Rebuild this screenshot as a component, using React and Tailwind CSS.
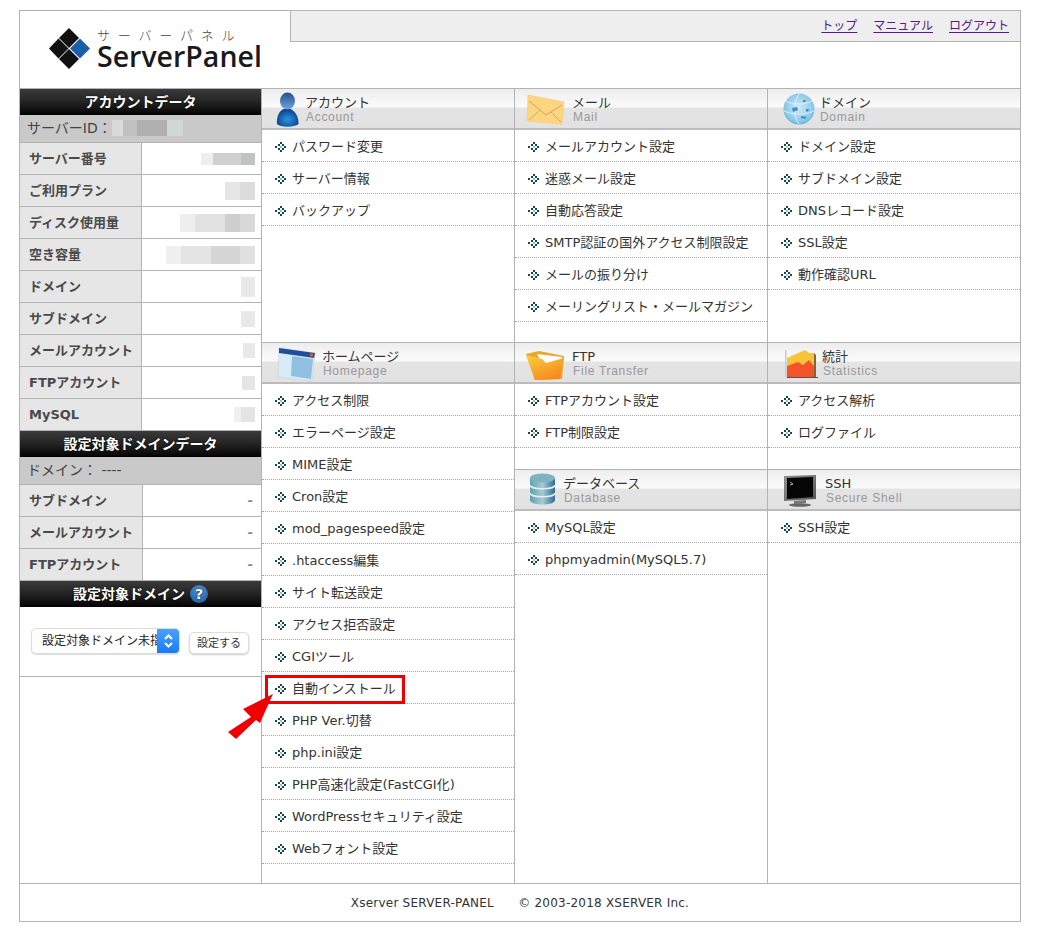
import React from "react";

const JP = "font-['DejaVu_Sans','Noto_Sans_CJK_JP',sans-serif]";

function Bullet() {
  return (
    <svg width="12" height="10" viewBox="0 0 12 10" className="shrink-0" shapeRendering="crispEdges">
      <g fill="#12494f">
        <rect x="0" y="4" width="2" height="2" />
        <rect x="5" y="0" width="2" height="2" />
        <rect x="3" y="2" width="2" height="2" />
        <rect x="7" y="2" width="2" height="2" />
        <rect x="9" y="4" width="2" height="2" />
        <rect x="3" y="6" width="2" height="2" />
        <rect x="7" y="6" width="2" height="2" />
        <rect x="5" y="8" width="2" height="2" />
      </g>
      <rect x="5" y="4" width="2" height="2" fill="#9dbcbf" />
    </svg>
  );
}

function Item({ children }) {
  return (
    <li className="h-[32px] flex items-center pl-[13px] pt-[2px] gap-[5px] border-b border-dotted border-[#a8a8a8] text-[13px] leading-none text-[#333]">
      <Bullet />
      <span>{children}</span>
    </li>
  );
}

function Head({ icon, slot, ja, en }) {
  return (
    <div className="h-[41px] flex items-stretch border-b-2 border-[#bcbcbc] bg-[linear-gradient(#ededed_0%,#fbfbfb_46%,#e4e4e4_49%,#e2e2e2_100%)]">
      <div className={`${slot} shrink-0`}>{icon}</div>
      <div className="flex flex-col pt-[6px]">
        <span className="text-[13px] leading-[16px] text-[#333]">{ja}</span>
        <span className="font-['Liberation_Sans',sans-serif] text-[12px] leading-[12px] tracking-[0.7px] text-[#999] pl-[1px]">{en}</span>
      </div>
    </div>
  );
}

function Section({ icon, slot, ja, en, items, className = "" }) {
  return (
    <section className={className}>
      <Head icon={icon} slot={slot} ja={ja} en={en} />
      <ul>
        {items.map((t) => (
          <Item key={t}>{t}</Item>
        ))}
      </ul>
    </section>
  );
}

const AccountIcon = (
  <svg width="43" height="40" viewBox="0 0 43 40">
    <defs>
      <linearGradient id="ac1" x1="0" y1="0" x2="0" y2="1">
        <stop offset="0" stopColor="#24508f" />
        <stop offset="1" stopColor="#6fa5da" />
      </linearGradient>
      <radialGradient id="ac2" cx=".5" cy=".6" r=".6">
        <stop offset="0" stopColor="#2a96e0" />
        <stop offset="1" stopColor="#0d3c8a" />
      </radialGradient>
    </defs>
    <path d="M15 35 C14 27 18 21 22 20 H28 C32 21 37 27 36.5 35 C32 38.5 19 38.5 15 35Z" fill="url(#ac2)" />
    <ellipse cx="25.5" cy="12" rx="7.5" ry="8.5" fill="url(#ac1)" />
  </svg>
);

const MailIcon = (
  <svg width="57" height="40" viewBox="0 0 57 40">
    <path d="M13 6 L49 13 L47 35 L12 32Z" fill="#fdd57f" />
    <path d="M13 6 L49 13 L47 35 L12 32Z" fill="none" stroke="#fbc868" strokeWidth=".6" />
    <path d="M14 12 L31 26 L47 16 M14 31 L25 21 M46 33 L36 23" fill="none" stroke="#c9a773" strokeWidth="1" />
  </svg>
);

const DomainIcon = (
  <svg width="51" height="40" viewBox="0 0 51 40">
    <defs>
      <radialGradient id="gl" cx=".5" cy=".45" r=".6">
        <stop offset="0" stopColor="#cfe9f6" />
        <stop offset=".75" stopColor="#8cc9e8" />
        <stop offset="1" stopColor="#4fa6d6" />
      </radialGradient>
    </defs>
    <circle cx="31" cy="20" r="15.5" fill="url(#gl)" />
    <g fill="none" stroke="#eaf6fb" strokeWidth=".8">
      <path d="M18 12 C24 16 38 16 44 12 M16 22 C24 26 38 26 46 22 M31 5 C25 14 25 27 31 35" />
    </g>
    <g fill="#3b8fcb">
      <path d="M24 19 L29 18 L30 21 L25 23Z" />
      <path d="M33 27 L39 28 L37 30 L33 29Z" />
      <path d="M35 11 L38 11 L37 13 L35 13Z" />
      <path d="M38 20 L41 20 L40 23 L38 22Z" />
    </g>
  </svg>
);

const HomeIcon = (
  <svg width="60" height="40" viewBox="0 0 60 40">
    <path d="M17 5 L53 10 L50 38 L16 34Z" fill="#d8ecf8" stroke="#c9ced2" strokeWidth=".6" />
    <path d="M17 5 L53 10 L52 15 L17 10Z" fill="#1e4f9c" />
    <rect x="48" y="10.5" width="3" height="3" fill="#e4572e" />
    <path d="M30 13 L51 16 L49 36 L29 33Z" fill="#8fc0e2" />
  </svg>
);

const FtpIcon = (
  <svg width="57" height="40" viewBox="0 0 57 40">
    <defs>
      <linearGradient id="fd" x1="0" y1="0" x2=".6" y2="1">
        <stop offset="0" stopColor="#fbd03f" />
        <stop offset="1" stopColor="#f58a1f" />
      </linearGradient>
    </defs>
    <path d="M11 11 L24 8 L49 13 L47 36 L20 37Z" fill="#eea62a" />
    <path d="M22 11 L47 14 L46 26 L28 22Z" fill="#fff" />
    <path d="M11 12 L27 16 L31 20 L49 15 L45 36 L20 37Z" fill="url(#fd)" />
  </svg>
);

const StatsIcon = (
  <svg width="54" height="40" viewBox="0 0 54 40">
    <rect x="17" y="7" width="1.5" height="27" fill="#c9c9c9" />
    <path d="M19 15 L37 7 L41 10 L46 10 L46 24 L19 24Z" fill="#fbc23c" />
    <path d="M19 23 L30 19 L35 22 L41 17 L46 23 L46 34 L19 34Z" fill="#f7532a" />
    <path d="M46 10 L48 12 L48 34 L46 34Z" fill="#7a6a3a" />
    <path d="M19 34.5 H50" stroke="#555" strokeWidth="1" />
  </svg>
);

const DbIcon = (
  <svg width="48" height="40" viewBox="0 0 48 40">
    <defs>
      <linearGradient id="db" x1="0" y1="0" x2="1" y2="0">
        <stop offset="0" stopColor="#5ea0b0" />
        <stop offset=".5" stopColor="#a8cbd4" />
        <stop offset="1" stopColor="#2d6f92" />
      </linearGradient>
    </defs>
    <path d="M15 8 V30 C15 36 40 36 40 30 V8Z" fill="url(#db)" />
    <ellipse cx="27.5" cy="8" rx="12.5" ry="4.5" fill="#7fb3c2" />
    <path d="M15 15 C15 20 40 20 40 15 M15 23 C15 28 40 28 40 23" fill="none" stroke="#e6f0f3" strokeWidth="1.5" />
  </svg>
);

const SshIcon = (
  <svg width="57" height="40" viewBox="0 0 57 40">
    <defs>
      <linearGradient id="ss" x1="0" y1="0" x2="1" y2="1">
        <stop offset="0" stopColor="#8f8f8f" />
        <stop offset="1" stopColor="#555" />
      </linearGradient>
    </defs>
    <path d="M16 6 L48 5 L48 29 L16 31Z" fill="url(#ss)" />
    <path d="M19 8 L45 7 L45 27 L19 29Z" fill="#050505" />
    <path d="M22 12 L25 14 L22 15" fill="none" stroke="#ddd" strokeWidth=".8" />
    <path d="M26 31 L38 30 L38 33 L26 34Z" fill="#777" />
    <ellipse cx="32" cy="35" rx="11" ry="1.8" fill="#666" />
  </svg>
);

function Blur({ cells, h }) {
  return (
    <div className={`flex ${h} blur-[0.4px]`}>
      {cells.map(([w, c], i) => (
        <div key={i} style={{ width: w, backgroundColor: c }} />
      ))}
    </div>
  );
}

function BlackHead({ children }) {
  return (
    <div className="h-[26px] flex items-center justify-center gap-[5px] bg-[linear-gradient(#3a3a3a,#262626_45%,#0a0a0a_90%,#000)] text-white font-bold text-[14px] leading-none [text-shadow:0_0_2px_#000]">
      {children}
    </div>
  );
}

function GrayRow({ children }) {
  return (
    <div className="h-[28px] flex items-center bg-[#c9c9c9] border-b border-[#b3b3b3] pl-[7px] text-[14px] leading-none text-[#444] pb-[2px]">
      {children}
    </div>
  );
}

function DataRow({ label, children, labelW }) {
  return (
    <div className="h-[32px] flex border-b border-[#b3b3b3]">
      <div className={`${labelW} shrink-0 bg-[#e6e6e6] border-r border-[#b3b3b3] flex items-center pl-[9px] font-bold text-[13px] leading-none text-[#4a4a4a]`}>
        {label}
      </div>
      <div className="flex-1 flex items-center justify-end pr-[6px] text-[13px] font-bold text-[#888]">{children}</div>
    </div>
  );
}

const rowsA = [
  ["サーバー番号", [[12, "#eeeeee"], [28, "#d0d0d0"], [14, "#bfc3c3"]], "h-[12px]"],
  ["ご利用プラン", [[15, "#e6e6e6"], [15, "#dcdcdc"]], "h-[18px]"],
  ["ディスク使用量", [[15, "#eeeeee"], [30, "#e2e2e2"], [15, "#cfcfcf"], [15, "#d8d8d8"]], "h-[18px]"],
  ["空き容量", [[15, "#f0f0f0"], [30, "#e4e4e4"], [29, "#d6d6d6"], [15, "#e0e0e0"]], "h-[18px]"],
  ["ドメイン", [[14, "#e9e9e9"]], "h-[20px]"],
  ["サブドメイン", [[14, "#e8e8e8"]], "h-[16px]"],
  ["メールアカウント", [[12, "#e8e8e8"]], "h-[15px]"],
  ["FTPアカウント", [[13, "#e6e6e6"]], "h-[14px]"],
  ["MySQL", [[7, "#f0f0f0"], [14, "#e4e4e4"]], "h-[15px]"],
];

const col1a = ["パスワード変更", "サーバー情報", "バックアップ"];
const col2a = ["メールアカウント設定", "迷惑メール設定", "自動応答設定", "SMTP認証の国外アクセス制限設定", "メールの振り分け", "メーリングリスト・メールマガジン"];
const col3a = ["ドメイン設定", "サブドメイン設定", "DNSレコード設定", "SSL設定", "動作確認URL"];
const col1b = ["アクセス制限", "エラーページ設定", "MIME設定", "Cron設定", "mod_pagespeed設定", ".htaccess編集", "サイト転送設定", "アクセス拒否設定", "CGIツール", "自動インストール", "PHP Ver.切替", "php.ini設定", "PHP高速化設定(FastCGI化)", "WordPressセキュリティ設定", "Webフォント設定"];

export default function App() {
  return (
    <div className={`${JP} bg-white w-[1042px] h-[929px] pt-[10px] pl-[19px] relative overflow-hidden`}>
      <div className="w-[1002px] h-[912px] border border-[#b3b3b3] flex flex-col">
        <header className="h-[78px] shrink-0 flex border-b border-[#b3b3b3]">
          <div className="w-[270px] shrink-0 flex items-start pl-[29px] pt-[17px] gap-[6px]">
            <svg width="42" height="41" viewBox="0 0 42 41" className="shrink-0">
              <path d="M20 0 L30 10 L20 20 L10 10Z" fill="#111" />
              <path d="M9.5 10.5 L19.5 20.5 L9.5 30.5 L0 20.5Z" fill="#111" />
              <path d="M31 10.5 L41 20.5 L31 30.5 L21 20.5Z" fill="#1a5ea8" />
              <path d="M20 21 L30 31 L20 41 L10 31Z" fill="#111" />
            </svg>
            <div className="flex flex-col -mt-[1px]">
              <span className="text-[13px] leading-[15px] tracking-[7.8px] text-[#444] font-light whitespace-nowrap font-['Noto_Sans_CJK_JP',sans-serif]">サーバーパネル</span>
              <span className="font-['Open_Sans',sans-serif] font-semibold text-[28.5px] leading-[28px] text-[#1a1a1a] whitespace-nowrap">ServerPanel</span>
            </div>
          </div>
          <div className="flex-1 h-[31px] bg-[#eeeeee] border-l border-b border-[#b3b3b3] flex items-center justify-end gap-[16px] pr-[11px] text-[12px] leading-none text-[#551a8b]">
            <a href="#top" className="underline underline-offset-[2px]">トップ</a>
            <a href="#manual" className="underline underline-offset-[2px]">マニュアル</a>
            <a href="#logout" className="underline underline-offset-[2px]">ログアウト</a>
          </div>
        </header>

        <main className="flex-1 flex min-h-0">
          <aside className="w-[242px] shrink-0 border-r border-[#b3b3b3]">
            <BlackHead>アカウントデータ</BlackHead>
            <GrayRow>
              <span>サーバーID：</span>
              <Blur cells={[[11, "#dadada"], [14, "#c0c0c0"], [30, "#b0b0b0"], [16, "#d2d8d8"]]} h="h-[16px]" />
            </GrayRow>
            {rowsA.map(([l, cells, h]) => (
              <DataRow key={l} label={l} labelW="w-[122px]">
                <Blur cells={cells} h={h} />
              </DataRow>
            ))}
            <BlackHead>設定対象ドメインデータ</BlackHead>
            <GrayRow>
              <span>ドメイン：&nbsp;----</span>
            </GrayRow>
            {["サブドメイン", "メールアカウント", "FTPアカウント"].map((l) => (
              <DataRow key={l} label={l} labelW="w-[123px]"><span className="mr-[2px]">-</span></DataRow>
            ))}
            <BlackHead>
              <span>設定対象ドメイン</span>
              <span className="w-[18px] h-[18px] rounded-full bg-[radial-gradient(circle_at_50%_30%,#4a94d8,#155a9c)] flex items-center justify-center text-[14px] font-bold text-white">?</span>
            </BlackHead>
            <div className="h-[70px] border-b border-[#b3b3b3] flex items-start pl-[11px] pt-[21px] gap-[9px]">
              <div className="w-[149px] h-[26px] flex rounded-[5px] overflow-hidden bg-white border border-[#dcdcdc] shadow-[0_1px_1px_#ddd]">
                <div className="w-[125px] shrink-0 overflow-hidden whitespace-nowrap pl-[10px] text-[12px] leading-[24px] text-[#222]">設定対象ドメイン未指定</div>
                <div className="flex-1 bg-[linear-gradient(#4aa0ff,#1a7cf2)] flex items-center justify-center">
                  <svg width="11" height="18" viewBox="0 0 11 18" fill="none" stroke="#fff" strokeWidth="2">
                    <path d="M2 7 L5.5 3.5 L9 7 M2 11 L5.5 14.5 L9 11" />
                  </svg>
                </div>
              </div>
              <button className="mt-[4px] w-[60px] h-[22px] rounded-[5px] bg-white border border-[#dcdcdc] shadow-[0_1px_2px_#ccc] text-[11px] leading-none text-[#333]">設定する</button>
            </div>
          </aside>

          <div className="flex-1 flex flex-col min-w-0">
            <div className="h-[254px] shrink-0 flex border-b border-[#b3b3b3]">
              <Section className="w-[253px] border-r border-[#b3b3b3]" icon={AccountIcon} slot="w-[43px]" ja="アカウント" en="Account" items={col1a} />
              <Section className="w-[253px] border-r border-[#b3b3b3]" icon={MailIcon} slot="w-[57px]" ja="メール" en="Mail" items={col2a} />
              <Section className="flex-1" icon={DomainIcon} slot="w-[51px]" ja="ドメイン" en="Domain" items={col3a} />
            </div>
            <div className="flex-1 flex min-h-0">
              <Section className="w-[253px] border-r border-[#b3b3b3]" icon={HomeIcon} slot="w-[60px]" ja="ホームページ" en="Homepage" items={col1b} />
              <div className="w-[253px] border-r border-[#b3b3b3]">
                <Section className="h-[127px] border-b border-[#b3b3b3]" icon={FtpIcon} slot="w-[57px]" ja="FTP" en="File Transfer" items={["FTPアカウント設定", "FTP制限設定"]} />
                <Section icon={DbIcon} slot="w-[48px]" ja="データベース" en="Database" items={["MySQL設定", "phpmyadmin(MySQL5.7)"]} />
              </div>
              <div className="flex-1">
                <Section className="h-[127px] border-b border-[#b3b3b3]" icon={StatsIcon} slot="w-[54px]" ja="統計" en="Statistics" items={["アクセス解析", "ログファイル"]} />
                <Section icon={SshIcon} slot="w-[57px]" ja="SSH" en="Secure Shell" items={["SSH設定"]} />
              </div>
            </div>
          </div>
        </main>

        <footer className="h-[38px] shrink-0 border-t border-[#b3b3b3] flex items-center justify-center text-[12px] tracking-[0.22px] leading-none text-[#333]">
          <span className="whitespace-pre">Xserver SERVER-PANEL      © 2003-2018 XSERVER Inc.</span>
        </footer>
      </div>

      <div className="absolute left-[265px] top-[675px] w-[140px] h-[29px] border-[3px] border-[#f00000]" />
      <svg className="absolute left-[226px] top-[690px]" width="52" height="52" viewBox="0 0 52 52">
        <path d="M47 4 L17 19 L25 27 L2 42 L10 49 L30 30 L34 33Z" fill="#f00000" />
      </svg>
    </div>
  );
}
